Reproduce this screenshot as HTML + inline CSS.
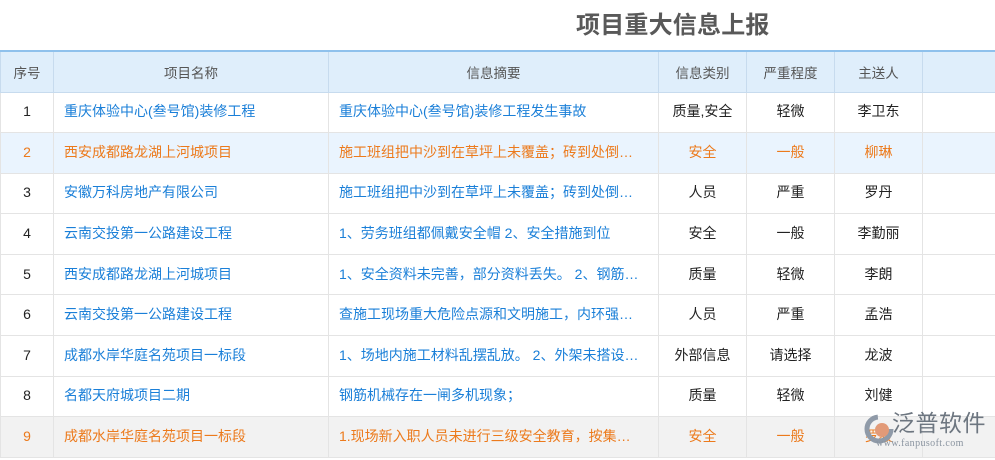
<!DOCTYPE html>
<html><head><meta charset="utf-8"><style>
*{margin:0;padding:0;box-sizing:border-box}
body{width:995px;height:460px;overflow:hidden;background:#fff;font-family:"Liberation Sans","Noto Sans CJK SC",sans-serif;position:relative}
.t{position:absolute;left:576px;top:5px;font-size:24px;font-weight:bold;color:#595959;letter-spacing:0.2px}
table{position:absolute;left:0;top:50px;border-collapse:collapse;table-layout:fixed;width:996px;font-size:14px}
th{height:41px;background:#dfeefb;color:#555;font-weight:normal;border:1px solid #c7dbee;border-top:2px solid #8fc1ec;font-size:13.5px}
td{height:40.6px;border:1px solid #e4e4e4;text-align:center;color:#222;white-space:nowrap;overflow:hidden;padding-bottom:2px}
td.l{text-align:left;padding-left:10px;color:#1a7fd8}
tr.o td{color:#ec7a1c}
tr.b td{background:#eaf4fe}
tr.g td{background:#f2f2f2}
.logo{position:absolute;left:864px;top:410px}
</style></head><body>
<div class="t">项目重大信息上报</div>
<table>
<colgroup><col style="width:53px"><col style="width:275px"><col style="width:330px"><col style="width:88px"><col style="width:88px"><col style="width:88px"><col style="width:74px"></colgroup>
<tr><th>序号</th><th>项目名称</th><th>信息摘要</th><th>信息类别</th><th>严重程度</th><th>主送人</th><th></th></tr>
<tr><td>1</td><td class="l">重庆体验中心(叁号馆)装修工程</td><td class="l">重庆体验中心(叁号馆)装修工程发生事故</td><td>质量,安全</td><td>轻微</td><td>李卫东</td><td></td></tr>
<tr class="o b"><td>2</td><td class="l">西安成都路龙湖上河城项目</td><td class="l">施工班组把中沙到在草坪上未覆盖；砖到处倒…</td><td>安全</td><td>一般</td><td>柳琳</td><td></td></tr>
<tr><td>3</td><td class="l">安徽万科房地产有限公司</td><td class="l">施工班组把中沙到在草坪上未覆盖；砖到处倒…</td><td>人员</td><td>严重</td><td>罗丹</td><td></td></tr>
<tr><td>4</td><td class="l">云南交投第一公路建设工程</td><td class="l">1、劳务班组都佩戴安全帽 2、安全措施到位</td><td>安全</td><td>一般</td><td>李勤丽</td><td></td></tr>
<tr><td>5</td><td class="l">西安成都路龙湖上河城项目</td><td class="l">1、安全资料未完善，部分资料丢失。 2、钢筋…</td><td>质量</td><td>轻微</td><td>李朗</td><td></td></tr>
<tr><td>6</td><td class="l">云南交投第一公路建设工程</td><td class="l">查施工现场重大危险点源和文明施工，内环强…</td><td>人员</td><td>严重</td><td>孟浩</td><td></td></tr>
<tr><td>7</td><td class="l">成都水岸华庭名苑项目一标段</td><td class="l">1、场地内施工材料乱摆乱放。 2、外架未搭设…</td><td>外部信息</td><td>请选择</td><td>龙波</td><td></td></tr>
<tr><td>8</td><td class="l">名都天府城项目二期</td><td class="l">钢筋机械存在一闸多机现象；</td><td>质量</td><td>轻微</td><td>刘健</td><td></td></tr>
<tr class="o g"><td>9</td><td class="l">成都水岸华庭名苑项目一标段</td><td class="l">1.现场新入职人员未进行三级安全教育，按集…</td><td>安全</td><td>一般</td><td>罗毅</td><td></td></tr>
</table>
<div class="logo">
<svg width="30" height="34" style="position:absolute;left:0;top:2px"><circle cx="15" cy="17" r="12" fill="none" stroke="#8f9aa8" stroke-width="5" stroke-dasharray="55 30"/><circle cx="18" cy="18" r="7" fill="#e29a78"/></svg>
<div style="position:absolute;left:28px;top:0px;font-size:23px;line-height:26px;color:#6d7680;white-space:nowrap;letter-spacing:0.5px">泛普软件</div>
<div style="position:absolute;left:12px;top:28px;font-size:10px;line-height:12px;color:#8a94a0;font-family:'Liberation Serif',serif;white-space:nowrap;letter-spacing:0.4px">www.fanpusoft.com</div>
</div>
</body></html>
